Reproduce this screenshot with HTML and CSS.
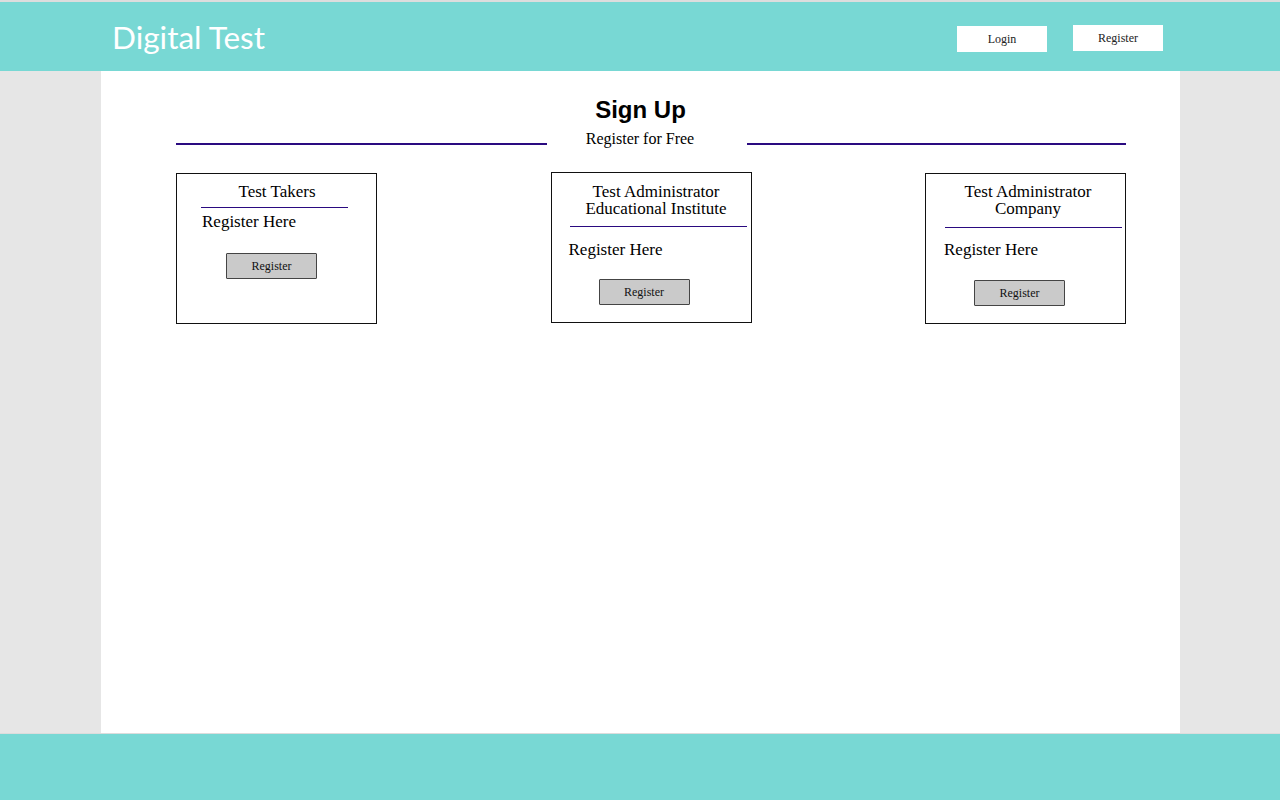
FILE: index.html
```html
<!DOCTYPE html>
<html>
<head>
<meta charset="utf-8">
<title>Digital Test</title>
<link rel="stylesheet" href="styles.css">
</head>
<body>
<div class="page">
  <header class="topbar">
    <div class="brand">Digital Test</div>
    <nav class="nav">
      <a class="nav-btn nav-login">Login</a>
      <a class="nav-btn nav-register">Register</a>
    </nav>
  </header>
  <main class="panel">
    <h1 class="title">Sign Up</h1>
    <div class="subtitle-row">
      <span class="rule rule-left"></span>
      <span class="subtitle">Register for Free</span>
      <span class="rule"></span>
    </div>
    <div class="cards">
      <section class="card card-1">
        <h2 class="card-title">Test Takers</h2>
        <div class="card-rule"></div>
        <p class="card-text">Register Here</p>
        <button class="card-btn">Register</button>
      </section>
      <section class="card card-2">
        <h2 class="card-title">Test Administrator<br>Educational Institute</h2>
        <div class="card-rule"></div>
        <p class="card-text">Register Here</p>
        <button class="card-btn">Register</button>
      </section>
      <section class="card card-3">
        <h2 class="card-title">Test Administrator<br>Company</h2>
        <div class="card-rule"></div>
        <p class="card-text">Register Here</p>
        <button class="card-btn">Register</button>
      </section>
    </div>
  </main>
  <footer class="footer"></footer>
</div>
</body>
</html>
```
FILE: styles.css
```css
* { box-sizing: border-box; }
html, body { margin: 0; padding: 0; }
body {
  background: #e6e6e6;
  font-family: "Liberation Serif", "Times New Roman", serif;
  color: #000;
}
.page {
  display: flex;
  flex-direction: column;
  height: 800px;
  border-top: 2px solid #dddddd;
}
.topbar {
  height: 69px;
  background: #78d8d4;
  display: flex;
  align-items: center;
  padding: 0 117px 0 112px;
}
.brand {
  font-family: Lato, "Liberation Sans", sans-serif;
  font-size: 31.5px;
  color: #fff;
  flex: 1;
  margin-top: 1px;
}
.nav {
  display: flex;
  align-items: flex-start;
  gap: 26px;
  margin-top: 4px;
}
.nav-btn {
  width: 90px;
  height: 26px;
  background: #fff;
  color: #222;
  font-size: 12px;
  display: flex;
  align-items: center;
  justify-content: center;
}
.nav-login { margin-top: 1px; }
.panel {
  width: 1079px;
  margin-left: 101px;
  height: 662px;
  background: #fff;
  padding: 25px 54px 0 75px;
}
.title {
  margin: 0 -54px 0 -75px;
  text-align: center;
  font-family: "Liberation Sans", Arial, sans-serif;
  font-weight: bold;
  font-size: 24px;
  line-height: 28px;
}
.subtitle-row {
  display: flex;
  align-items: center;
  height: 18px;
  margin-top: 6px;
}
.rule {
  flex: 1;
  height: 2px;
  background: #2a0a80;
  margin-top: 10px;
}
.rule-left { flex: 0 0 371px; }
.subtitle {
  width: 200px;
  padding-right: 14px;
  text-align: center;
  font-size: 16px;
  line-height: 18px;
}
.cards {
  display: flex;
  justify-content: space-between;
  margin-top: 25px;
}
.card {
  width: 201px;
  height: 151px;
  border: 1px solid #111;
  display: flex;
  flex-direction: column;
  align-items: flex-start;
}
.card-2 { margin-top: -1px; }
.card-title {
  margin: 0;
  font-weight: normal;
  font-size: 17px;
  line-height: 17px;
  text-align: center;
  align-self: stretch;
}
.card-rule {
  height: 1px;
  background: #2a0a80;
}
.card-text {
  margin: 0;
  font-size: 17px;
  line-height: 20px;
}
.card-btn {
  width: 91px;
  height: 26px;
  background: #cacaca;
  border: 1px solid #444;
  border-radius: 1px;
  font-family: "Liberation Serif", "Times New Roman", serif;
  font-size: 12px;
  color: #111;
  padding: 0;
}
.card-1 .card-title { padding-top: 9px; padding-left: 1px; }
.card-1 .card-rule { width: 147px; margin: 7px 0 0 24px; }
.card-1 .card-text { margin: 4px 0 0 25px; }
.card-1 .card-btn { margin: 21px 0 0 49px; }
.card-2 .card-title { padding-top: 10px; padding-left: 10px; }
.card-2 .card-rule { width: 177px; margin: 9px 0 0 18px; }
.card-2 .card-text { margin: 13px 0 0 17px; }
.card-2 .card-btn { margin: 19px 0 0 47px; }
.card-3 .card-title { padding-top: 9px; padding-left: 5px; }
.card-3 .card-rule { width: 177px; margin: 10px 0 0 19px; }
.card-3 .card-text { margin: 12px 0 0 18px; }
.card-3 .card-btn { margin: 20px 0 0 48px; }
.footer {
  flex: 1;
  background: #78d8d4;
  border-top: 1px solid #dcdcdc;
}
```
